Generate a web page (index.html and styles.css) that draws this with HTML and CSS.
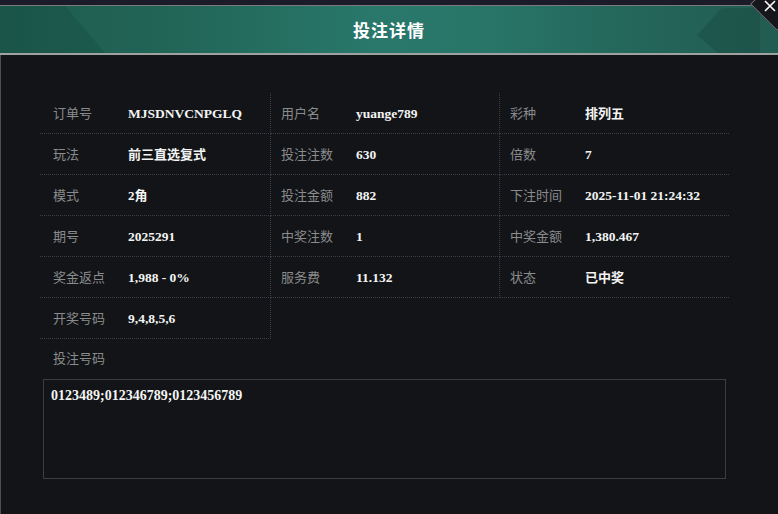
FILE: index.html
```html
<!DOCTYPE html>
<html lang="zh-CN">
<head>
  <meta charset="UTF-8" />
  <meta name="viewport" content="width=device-width, initial-scale=1" />
  <title>投注详情</title>
  <link rel="stylesheet" href="styles.css">
</head>
<body>

  <div class="dialog">
    <div class="topbar"></div>

    <div class="dialog-head">
      <h1>投注详情</h1>
      <button class="close" aria-label="关闭">
        <span class="close-bg"></span>
        <svg width="12" height="12" viewBox="0 0 12 12">
          <path d="M1 1 L11 11 M11 1 L1 11" stroke="#fff" stroke-width="1.6" fill="none" />
        </svg>
      </button>
    </div>

    <div class="dialog-body">
      <div class="info-grid">
        <div class="cell"><span class="label">订单号</span><span class="value">MJSDNVCNPGLQ</span></div>
        <div class="cell"><span class="label">用户名</span><span class="value">yuange789</span></div>
        <div class="cell"><span class="label">彩种</span><span class="value cn">排列五</span></div>

        <div class="cell"><span class="label">玩法</span><span class="value cn">前三直选复式</span></div>
        <div class="cell"><span class="label">投注注数</span><span class="value">630</span></div>
        <div class="cell"><span class="label">倍数</span><span class="value">7</span></div>

        <div class="cell"><span class="label">模式</span><span class="value cn">2角</span></div>
        <div class="cell"><span class="label">投注金额</span><span class="value">882</span></div>
        <div class="cell"><span class="label">下注时间</span><span class="value">2025-11-01 21:24:32</span></div>

        <div class="cell"><span class="label">期号</span><span class="value">2025291</span></div>
        <div class="cell"><span class="label">中奖注数</span><span class="value">1</span></div>
        <div class="cell"><span class="label">中奖金额</span><span class="value">1,380.467</span></div>

        <div class="cell"><span class="label">奖金返点</span><span class="value">1,988 - 0%</span></div>
        <div class="cell"><span class="label">服务费</span><span class="value">11.132</span></div>
        <div class="cell"><span class="label">状态</span><span class="value cn">已中奖</span></div>

        <div class="cell"><span class="label">开奖号码</span><span class="value">9,4,8,5,6</span></div>
      </div>

      <div class="codes-label">投注号码</div>
      <div class="codes-box">0123489;012346789;0123456789</div>
    </div>
  </div>

</body>
</html>
```

FILE: styles.css
```css
body {
  margin: 0;
  background: #121417;
  font-family: "Noto Sans CJK SC", "Noto Sans", sans-serif;
  color: #fff;
}

.dialog {
  width: 778px;
  height: 514px;
  overflow: hidden;
  background: #121417;
}

.topbar {
  height: 5px;
  background: #1b1b29;
  border-bottom: 1px solid #7a7a7a;
}

/* Header */
.dialog-head {
  position: relative;
  height: 47px;
  border-bottom: 2px solid #9ea3a2;
  background: linear-gradient(90deg, #1e5b4f 0%, #226759 25%, #29786b 48%, #297669 62%, #24675b 80%, #225c52 100%);
  display: flex;
  align-items: center;
  justify-content: center;
}

.dialog-head::before {
  content: "";
  position: absolute;
  left: 0;
  top: 0;
  width: 105px;
  height: 100%;
  background: rgba(16, 60, 50, 0.2);
  clip-path: polygon(0 0, 62% 0, 100% 100%, 0 100%);
}

.dialog-head::after {
  content: "";
  position: absolute;
  left: 690px;
  top: 0;
  width: 70px;
  height: 100%;
  background: rgba(14, 50, 44, 0.22);
  clip-path: polygon(10% 62%, 45% 5%, 100% 5%, 100% 100%, 40% 100%);
}

.dialog-head h1 {
  margin: 0 0 1px;
  font-size: 17px;
  font-weight: bold;
  letter-spacing: 1px;
  color: #fff;
  position: relative;
  z-index: 1;
}

.close {
  position: absolute;
  right: 0;
  top: -6px;
  width: 28px;
  height: 30px;
  padding: 0;
  background: none;
  border: none;
  z-index: 2;
  cursor: pointer;
}

.close-bg {
  position: absolute;
  left: 8px;
  top: -15px;
  width: 36px;
  height: 36px;
  background: #16161d;
  border: 1px solid #6e6e6e;
  transform: rotate(45deg);
}

.close svg {
  position: absolute;
  left: 14px;
  top: 0;
}

/* Body */
.dialog-body {
  height: 459px;
  border-left: 1px solid #4c4f52;
  padding: 38px 0 0 39px;
}

.info-grid {
  display: grid;
  grid-template-columns: 231px 229px 229px;
}

.cell {
  height: 40px;
  line-height: 36px;
  padding-left: 13px;
  white-space: nowrap;
  border-bottom: 1px dotted #3a3d43;
  border-right: 1px dotted #3a3d43;
}

.cell:nth-child(3n+2),
.cell:nth-child(3n) {
  padding-left: 10px;
}

.cell:nth-child(3n) {
  border-right: none;
}

.label {
  display: inline-block;
  width: 75px;
  font-size: 13px;
  color: #8a8b8c;
}

.value {
  font-family: "Liberation Serif", "Noto Sans CJK SC", serif;
  font-size: 13.5px;
  font-weight: bold;
  color: #f4f4f4;
}

.value.cn {
  font-size: 13px;
}

.codes-label {
  height: 40px;
  line-height: 38px;
  padding-left: 13px;
  font-size: 13px;
  color: #8a8b8c;
}

.codes-box {
  margin-left: 3px;
  width: 667px;
  height: 82px;
  padding: 8px 7px;
  border: 1px solid #3b3e41;
  font-family: "Liberation Serif", serif;
  font-size: 14px;
  font-weight: bold;
  color: #f4f4f4;
}
```
